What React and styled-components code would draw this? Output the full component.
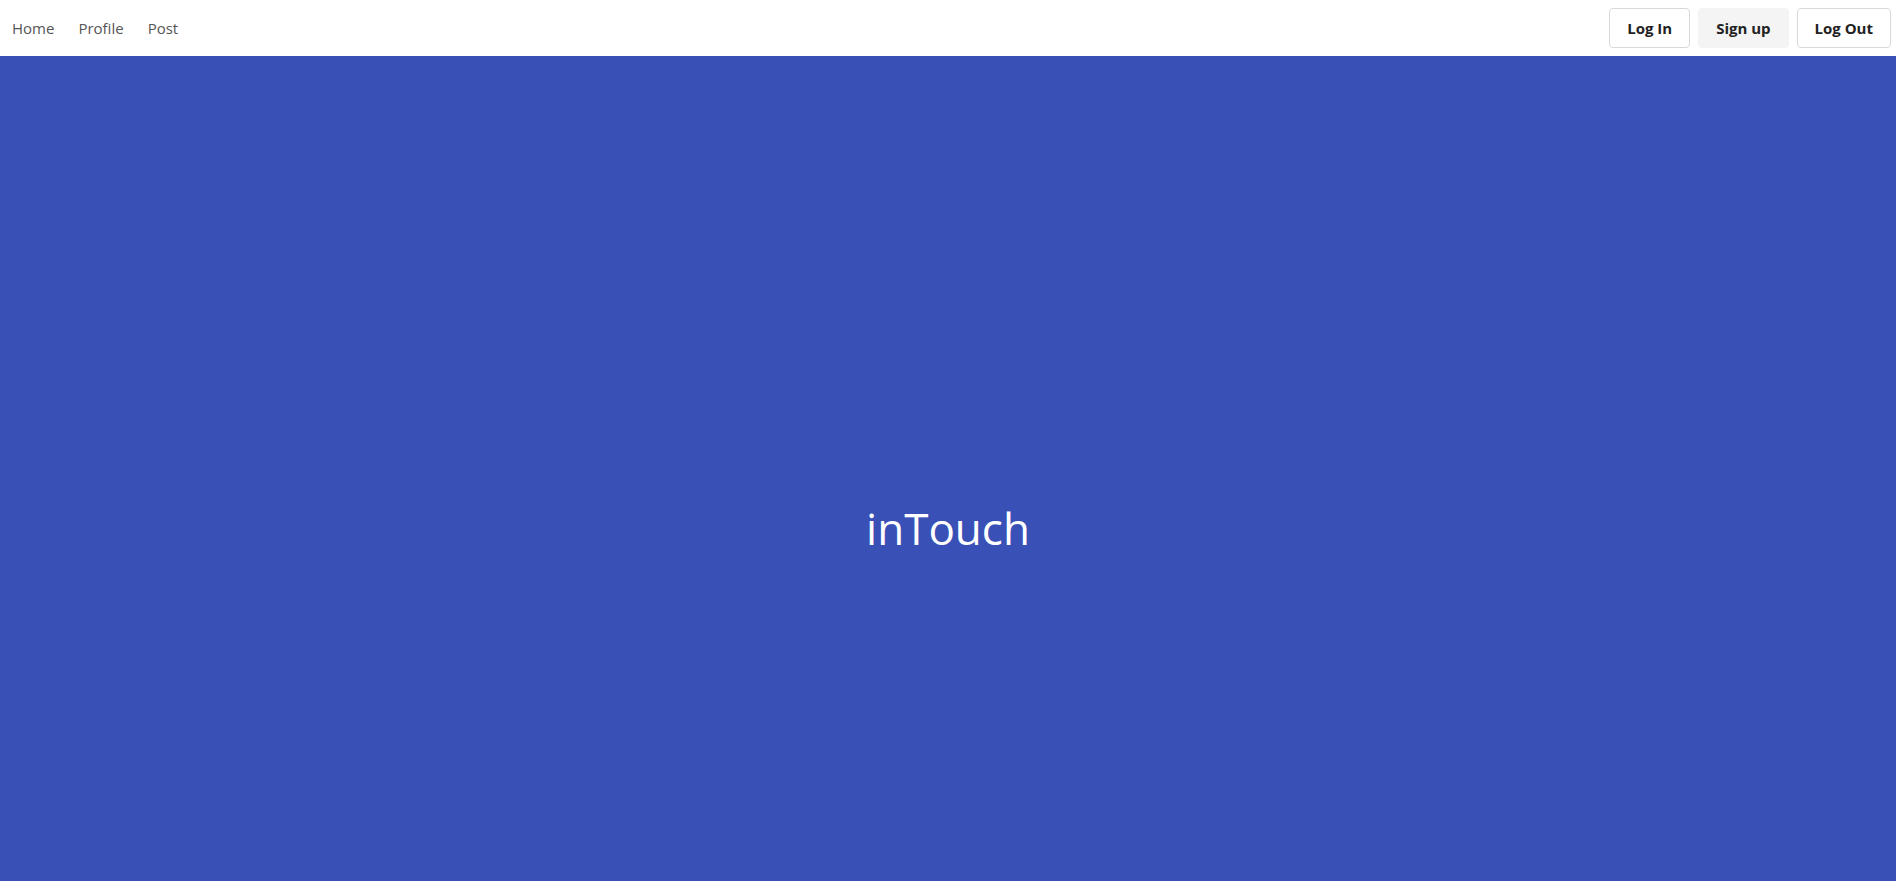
import React from "react";
import styled, { createGlobalStyle } from "styled-components";

const Global = createGlobalStyle`
  html, body { margin: 0; padding: 0; }
  body { font-family: "Open Sans", "Noto Sans", sans-serif; background: #3951b7; }
  * { box-sizing: border-box; }
`;

const Page = styled.div`
  display: flex;
  flex-direction: column;
  min-height: 100vh;
`;

const Header = styled.header`
  height: 56px;
  background: #fff;
  display: flex;
  align-items: center;
  justify-content: space-between;
  padding: 0 5px 0 12px;
`;

const Nav = styled.nav`
  display: flex;
  gap: 24px;
  align-items: center;
`;

const NavLink = styled.a`
  font-size: 15px;
  color: #555;
  text-decoration: none;
  cursor: pointer;
`;

const Actions = styled.div`
  display: flex;
  gap: 8px;
  align-items: center;
`;

const Button = styled.button`
  height: 40px;
  padding: 0 17px;
  border-radius: 4px;
  font-family: inherit;
  font-weight: 700;
  font-size: 15px;
  color: #222;
  background: ${(p) => (p.$filled ? "#f4f4f4" : "#fff")};
  border: 1px solid ${(p) => (p.$filled ? "#f4f4f4" : "#d9d9d9")};
  cursor: pointer;
`;

const Hero = styled.main`
  flex: 1;
  background: #3951b7;
  display: flex;
  justify-content: center;
  padding-top: 442px;
`;

const Title = styled.h1`
  margin: 0;
  font-size: 44px;
  font-weight: 400;
  color: #fff;
  line-height: 60px;
  height: 60px;
`;

export default function App() {
  return (
    <Page>
      <Global />
      <Header>
        <Nav>
          <NavLink>Home</NavLink>
          <NavLink>Profile</NavLink>
          <NavLink>Post</NavLink>
        </Nav>
        <Actions>
          <Button>Log In</Button>
          <Button $filled>Sign up</Button>
          <Button>Log Out</Button>
        </Actions>
      </Header>
      <Hero>
        <Title>inTouch</Title>
      </Hero>
    </Page>
  );
}
